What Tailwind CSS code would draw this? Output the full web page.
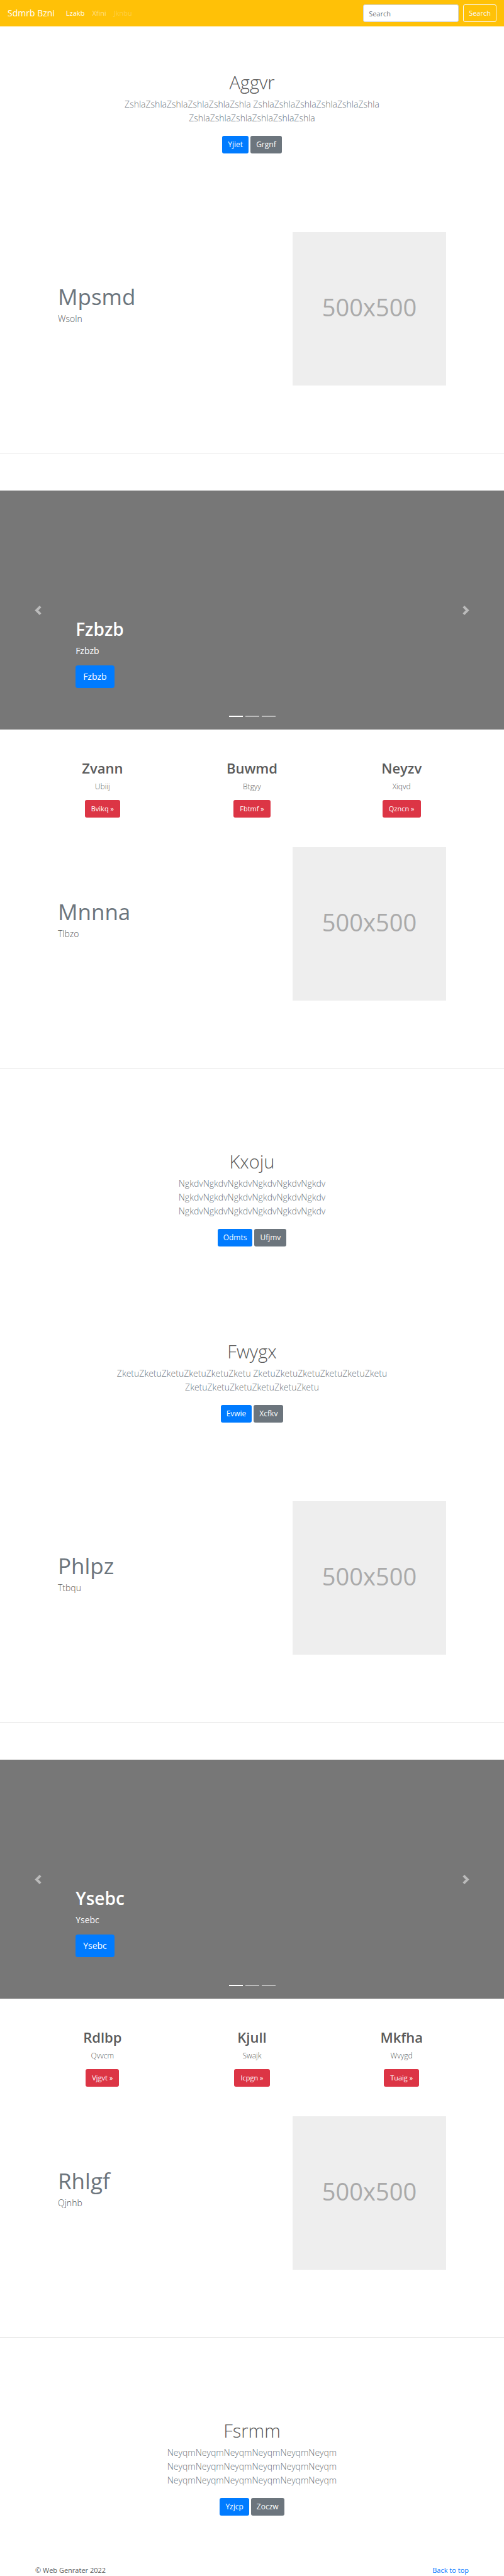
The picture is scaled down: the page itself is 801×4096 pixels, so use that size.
<!DOCTYPE html>
<html lang="en">
<head>
<meta charset="utf-8">
<meta name="viewport" content="width=device-width, initial-scale=1">
<title>Sdmrb Bzni</title>
<script src="https://cdn.jsdelivr.net/npm/@tailwindcss/browser@4"></script>
</head>
<body id="top" class="bg-white font-['Open_Sans','Noto_Sans',sans-serif] text-[12px] leading-[18px] text-[#5a5a5a]">

<header>
  <nav class="flex items-center bg-[#ffc107] px-3 py-[7px]">
    <a href="#top" class="mr-3 text-[14px] leading-[22px] text-white">Sdmrb Bzni</a>
    <ul class="flex grow items-center text-[11px]">
      <li><a href="#" class="block px-1.5 text-white">Lzakb</a></li>
      <li><a href="#" class="block px-1.5 text-white/50">Xfini</a></li>
      <li><a href="#" class="block px-1.5 text-white/25">Jknbu</a></li>
    </ul>
    <form class="flex items-center gap-[7px]">
      <input type="search" aria-label="Search" placeholder="Search" class="h-7 w-38 rounded-[3px] border border-[#ced4da] bg-white px-2 text-[11px] text-[#495057] placeholder:text-[#6c757d]">
      <button type="button" class="h-7 rounded-[3px] border border-[#f8f9fa] px-2 text-[11px] text-[#f8f9fa]">Search</button>
    </form>
  </nav>
</header>

<main>
  <section class="px-11 pt-[71px] pb-[78px] text-center">
    <h1 class="mb-1.5 text-[29px] leading-9 font-light">Aggvr</h1>
    <p class="mx-auto mb-[17px] max-w-[440px] text-[14px] leading-[22px] font-light text-[#6c757d]">ZshlaZshlaZshlaZshlaZshlaZshla ZshlaZshlaZshlaZshlaZshlaZshla ZshlaZshlaZshlaZshlaZshlaZshla</p>
    <div class="flex justify-center gap-[3px] text-[12px] text-white">
      <a href="#" class="flex h-7 items-center rounded-[3px] bg-[#007bff] px-[9px]">Yjiet</a>
      <a href="#" class="flex h-7 items-center rounded-[3px] bg-[#6c757d] px-[9px]">Grgnf</a>
    </div>
  </section>

  <section class="flex items-center justify-between px-[92px] pt-[47px] pb-[107px]">
    <div>
      <h2 class="mb-0.5 text-[35px] leading-11 text-[#6c757d]">Mpsmd</h2>
      <p class="mb-[14px] text-[14px] leading-[22px] font-light">Wsoln</p>
    </div>
    <div class="flex aspect-square w-61 items-center justify-center bg-[#eeeeee] pb-1.5 text-[38px] leading-none text-[#aaaaaa]">500x500</div>
  </section>
  <hr class="mb-[59px] border-[#e5e5e5]">

  <section aria-label="Slides" class="relative flex h-95 flex-col items-start justify-end bg-[#777777] px-[15%] pb-[66px] text-white">
    <h2 class="mb-1.5 text-[28px] leading-9 font-semibold">Fzbzb</h2>
    <p class="mb-3 text-[14px] leading-[22px]">Fzbzb</p>
    <a href="#" class="flex h-9 items-center rounded-[4px] bg-[#007bff] px-3 text-[14px]">Fzbzb</a>
    <button type="button" aria-label="Previous" class="absolute inset-y-0 left-0 flex w-[15%] items-center justify-center opacity-50">
      <svg class="size-[15px]" viewBox="0 0 8 8" fill="#fff"><path d="M5.25 0l-4 4 4 4 1.5-1.5L4.25 4l2.5-2.5L5.25 0z"/></svg>
    </button>
    <button type="button" aria-label="Next" class="absolute inset-y-0 right-0 flex w-[15%] items-center justify-center opacity-50">
      <svg class="size-[15px]" viewBox="0 0 8 8" fill="#fff"><path d="M2.75 0l-1.5 1.5L3.75 4l-2.5 2.5L2.75 8l4-4-4-4z"/></svg>
    </button>
    <div class="absolute inset-x-0 bottom-5 flex justify-center gap-1">
      <button type="button" aria-label="Slide 1" class="h-0.5 w-[22px] bg-white"></button>
      <button type="button" aria-label="Slide 2" class="h-0.5 w-[22px] bg-white/50"></button>
      <button type="button" aria-label="Slide 3" class="h-0.5 w-[22px] bg-white/50"></button>
    </div>
  </section>

  <section class="grid grid-cols-3 px-11 pt-[47px] text-center">
    <div class="flex flex-col items-center">
      <h2 class="mb-[7px] text-[22px] leading-7 font-semibold">Zvann</h2>
      <p class="mb-3 text-[12px] font-light">Ubiij</p>
      <a href="#" class="flex h-7 items-center rounded-[3px] bg-[#dc3545] px-[10px] text-[11px] text-white">Bvikq »</a>
    </div>
    <div class="flex flex-col items-center">
      <h2 class="mb-[7px] text-[22px] leading-7 font-semibold">Buwmd</h2>
      <p class="mb-3 text-[12px] font-light">Btgyy</p>
      <a href="#" class="flex h-7 items-center rounded-[3px] bg-[#dc3545] px-[10px] text-[11px] text-white">Fbtmf »</a>
    </div>
    <div class="flex flex-col items-center">
      <h2 class="mb-[7px] text-[22px] leading-7 font-semibold">Neyzv</h2>
      <p class="mb-3 text-[12px] font-light">Xiqvd</p>
      <a href="#" class="flex h-7 items-center rounded-[3px] bg-[#dc3545] px-[10px] text-[11px] text-white">Qzncn »</a>
    </div>
  </section>

  <section class="flex items-center justify-between px-[92px] pt-[47px] pb-[107px]">
    <div>
      <h2 class="mb-0.5 text-[35px] leading-11 text-[#6c757d]">Mnnna</h2>
      <p class="mb-[14px] text-[14px] leading-[22px] font-light">Tlbzo</p>
    </div>
    <div class="flex aspect-square w-61 items-center justify-center bg-[#eeeeee] pb-1.5 text-[38px] leading-none text-[#aaaaaa]">500x500</div>
  </section>
  <hr class="mb-[59px] border-[#e5e5e5]">

  <section class="px-11 pt-[71px] pb-[78px] text-center">
    <h1 class="mb-1.5 text-[29px] leading-9 font-light">Kxoju</h1>
    <p class="mx-auto mb-[17px] max-w-[440px] text-[14px] leading-[22px] font-light text-[#6c757d]">NgkdvNgkdvNgkdvNgkdvNgkdvNgkdv NgkdvNgkdvNgkdvNgkdvNgkdvNgkdv NgkdvNgkdvNgkdvNgkdvNgkdvNgkdv</p>
    <div class="flex justify-center gap-[3px] text-[12px] text-white">
      <a href="#" class="flex h-7 items-center rounded-[3px] bg-[#007bff] px-[9px]">Odmts</a>
      <a href="#" class="flex h-7 items-center rounded-[3px] bg-[#6c757d] px-[9px]">Ufjmv</a>
    </div>
  </section>

  <section class="px-11 pt-[71px] pb-[78px] text-center">
    <h1 class="mb-1.5 text-[29px] leading-9 font-light">Fwygx</h1>
    <p class="mx-auto mb-[17px] max-w-[440px] text-[14px] leading-[22px] font-light text-[#6c757d]">ZketuZketuZketuZketuZketuZketu ZketuZketuZketuZketuZketuZketu ZketuZketuZketuZketuZketuZketu</p>
    <div class="flex justify-center gap-[3px] text-[12px] text-white">
      <a href="#" class="flex h-7 items-center rounded-[3px] bg-[#007bff] px-[9px]">Evwie</a>
      <a href="#" class="flex h-7 items-center rounded-[3px] bg-[#6c757d] px-[9px]">Xcfkv</a>
    </div>
  </section>

  <section class="flex items-center justify-between px-[92px] pt-[47px] pb-[107px]">
    <div>
      <h2 class="mb-0.5 text-[35px] leading-11 text-[#6c757d]">Phlpz</h2>
      <p class="mb-[14px] text-[14px] leading-[22px] font-light">Ttbqu</p>
    </div>
    <div class="flex aspect-square w-61 items-center justify-center bg-[#eeeeee] pb-1.5 text-[38px] leading-none text-[#aaaaaa]">500x500</div>
  </section>
  <hr class="mb-[59px] border-[#e5e5e5]">

  <section aria-label="Slides" class="relative flex h-95 flex-col items-start justify-end bg-[#777777] px-[15%] pb-[66px] text-white">
    <h2 class="mb-1.5 text-[28px] leading-9 font-semibold">Ysebc</h2>
    <p class="mb-3 text-[14px] leading-[22px]">Ysebc</p>
    <a href="#" class="flex h-9 items-center rounded-[4px] bg-[#007bff] px-3 text-[14px]">Ysebc</a>
    <button type="button" aria-label="Previous" class="absolute inset-y-0 left-0 flex w-[15%] items-center justify-center opacity-50">
      <svg class="size-[15px]" viewBox="0 0 8 8" fill="#fff"><path d="M5.25 0l-4 4 4 4 1.5-1.5L4.25 4l2.5-2.5L5.25 0z"/></svg>
    </button>
    <button type="button" aria-label="Next" class="absolute inset-y-0 right-0 flex w-[15%] items-center justify-center opacity-50">
      <svg class="size-[15px]" viewBox="0 0 8 8" fill="#fff"><path d="M2.75 0l-1.5 1.5L3.75 4l-2.5 2.5L2.75 8l4-4-4-4z"/></svg>
    </button>
    <div class="absolute inset-x-0 bottom-5 flex justify-center gap-1">
      <button type="button" aria-label="Slide 1" class="h-0.5 w-[22px] bg-white"></button>
      <button type="button" aria-label="Slide 2" class="h-0.5 w-[22px] bg-white/50"></button>
      <button type="button" aria-label="Slide 3" class="h-0.5 w-[22px] bg-white/50"></button>
    </div>
  </section>

  <section class="grid grid-cols-3 px-11 pt-[47px] text-center">
    <div class="flex flex-col items-center">
      <h2 class="mb-[7px] text-[22px] leading-7 font-semibold">Rdlbp</h2>
      <p class="mb-3 text-[12px] font-light">Qvvcm</p>
      <a href="#" class="flex h-7 items-center rounded-[3px] bg-[#dc3545] px-[10px] text-[11px] text-white">Vjgvt »</a>
    </div>
    <div class="flex flex-col items-center">
      <h2 class="mb-[7px] text-[22px] leading-7 font-semibold">Kjull</h2>
      <p class="mb-3 text-[12px] font-light">Swajk</p>
      <a href="#" class="flex h-7 items-center rounded-[3px] bg-[#dc3545] px-[10px] text-[11px] text-white">Icpgn »</a>
    </div>
    <div class="flex flex-col items-center">
      <h2 class="mb-[7px] text-[22px] leading-7 font-semibold">Mkfha</h2>
      <p class="mb-3 text-[12px] font-light">Wvygd</p>
      <a href="#" class="flex h-7 items-center rounded-[3px] bg-[#dc3545] px-[10px] text-[11px] text-white">Tuaig »</a>
    </div>
  </section>

  <section class="flex items-center justify-between px-[92px] pt-[47px] pb-[107px]">
    <div>
      <h2 class="mb-0.5 text-[35px] leading-11 text-[#6c757d]">Rhlgf</h2>
      <p class="mb-[14px] text-[14px] leading-[22px] font-light">Qjnhb</p>
    </div>
    <div class="flex aspect-square w-61 items-center justify-center bg-[#eeeeee] pb-1.5 text-[38px] leading-none text-[#aaaaaa]">500x500</div>
  </section>
  <hr class="mb-[59px] border-[#e5e5e5]">

  <section class="px-11 pt-[71px] pb-[78px] text-center">
    <h1 class="mb-1.5 text-[29px] leading-9 font-light">Fsrmm</h1>
    <p class="mx-auto mb-[17px] max-w-[440px] text-[14px] leading-[22px] font-light text-[#6c757d]">NeyqmNeyqmNeyqmNeyqmNeyqmNeyqm NeyqmNeyqmNeyqmNeyqmNeyqmNeyqm NeyqmNeyqmNeyqmNeyqmNeyqmNeyqm</p>
    <div class="flex justify-center gap-[3px] text-[12px] text-white">
      <a href="#" class="flex h-7 items-center rounded-[3px] bg-[#007bff] px-[9px]">Yzjcp</a>
      <a href="#" class="flex h-7 items-center rounded-[3px] bg-[#6c757d] px-[9px]">Zoczw</a>
    </div>
  </section>
</main>

<footer class="flex justify-between px-14 text-[11px]">
  <p>© Web Genrater 2022</p>
  <a href="#top" class="text-[#007bff]">Back to top</a>
</footer>

</body>
</html>
